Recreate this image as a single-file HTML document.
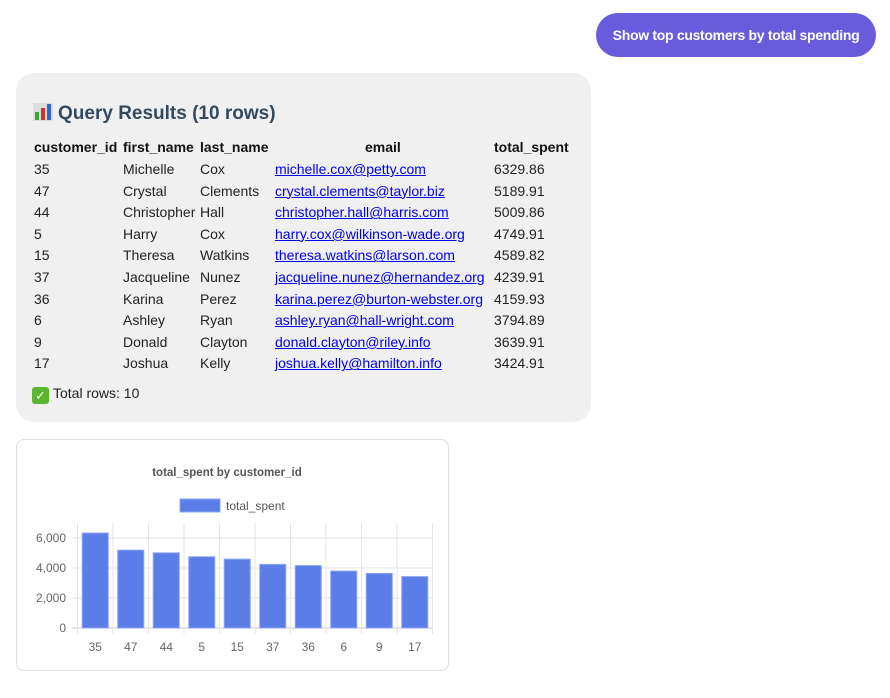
<!DOCTYPE html>
<html><head><meta charset="utf-8"><style>
body{margin:0;width:890px;height:698px;background:#fff;font-family:"Liberation Sans",Arial,sans-serif;position:relative;overflow:hidden}
.btn{position:absolute;left:596px;top:13px;width:280px;height:44px;border-radius:22px;background:#6a5bdc;color:#fff;font-size:14px;line-height:44px;text-align:center;font-weight:bold;letter-spacing:-0.3px}
.card{position:absolute;left:16px;top:73px;width:575px;height:349px;border-radius:18px;background:#f0f0f0}
h2{position:absolute;left:17px;top:30px;margin:0;font-size:19px;color:#34495e;font-weight:bold}
.t{position:absolute;font-size:14px;color:#222;white-space:nowrap}
.h{font-weight:bold;color:#111}
a{color:#0000ee;text-decoration:underline}
.chart{position:absolute;left:16px;top:439px;width:433px;height:232px;border:1px solid #ddd;border-radius:8px;box-sizing:border-box}
</style></head><body>
<div class="btn">Show top customers by total spending</div>
<div class="card">
<h2><span style="display:inline-block;width:20px;height:18px;vertical-align:-2px;background:#ddd;position:relative;margin-right:5px"><i style="position:absolute;left:2px;bottom:1px;width:4px;height:8px;background:#3a3"></i><i style="position:absolute;left:8px;bottom:1px;width:4px;height:12px;background:#c33"></i><i style="position:absolute;left:14px;bottom:1px;width:4px;height:16px;background:#36c"></i></span>Query Results (10 rows)</h2>
<div id="tbl"></div>
<div class="t" style="left:16px;top:312px"><span style="display:inline-block;width:17px;height:17px;background:#5cb531;border-radius:3px;color:#fff;font-size:13px;text-align:center;line-height:17px;vertical-align:-2px;margin-right:4px">✓</span>Total rows: 10</div>
</div>
<div class="chart">
<svg width="433" height="232" style="position:absolute;left:-1px;top:-1px" font-family="Liberation Sans, Arial, sans-serif">
<text x="211" y="37" text-anchor="middle" font-size="11.5" font-weight="bold" fill="#555">total_spent by customer_id</text>
<rect x="164" y="60" width="40" height="13" fill="#5b7de8" stroke="#8aa3f0"/>
<text x="210" y="71" font-size="12" fill="#555">total_spent</text>
<g id="g"></g>
</svg>
</div>
<script>
var d=[[35,"Michelle","Cox","michelle.cox@petty.com","6329.86"],[47,"Crystal","Clements","crystal.clements@taylor.biz","5189.91"],[44,"Christopher","Hall","christopher.hall@harris.com","5009.86"],[5,"Harry","Cox","harry.cox@wilkinson-wade.org","4749.91"],[15,"Theresa","Watkins","theresa.watkins@larson.com","4589.82"],[37,"Jacqueline","Nunez","jacqueline.nunez@hernandez.org","4239.91"],[36,"Karina","Perez","karina.perez@burton-webster.org","4159.93"],[6,"Ashley","Ryan","ashley.ryan@hall-wright.com","3794.89"],[9,"Donald","Clayton","donald.clayton@riley.info","3639.91"],[17,"Joshua","Kelly","joshua.kelly@hamilton.info","3424.91"]];
var h='<div class="t h" style="left:18px;top:66px">customer_id</div><div class="t h" style="left:107px;top:66px">first_name</div><div class="t h" style="left:184px;top:66px">last_name</div><div class="t h" style="left:349px;top:66px">email</div><div class="t h" style="left:478px;top:66px">total_spent</div>';
d.forEach(function(r,i){var y=88+i*21.6;h+='<div class="t" style="left:18px;top:'+y+'px">'+r[0]+'</div><div class="t" style="left:107px;top:'+y+'px">'+r[1]+'</div><div class="t" style="left:184px;top:'+y+'px">'+r[2]+'</div><div class="t" style="left:259px;top:'+y+'px"><a>'+r[3]+'</a></div><div class="t" style="left:478px;top:'+y+'px">'+r[4]+'</div>';});
document.getElementById('tbl').innerHTML=h;
var s='';
function X(x){return x-16}function Y(y){return y-438}
for(var k=0;k<=3;k++){var y=Y(627-k*30);s+='<line x1="'+X(72)+'" x2="'+X(433)+'" y1="'+y+'" y2="'+y+'" stroke="'+(k==0?'#ccc':'#e5e5e5')+'"/>';s+='<text x="'+X(66)+'" y="'+(y+4)+'" text-anchor="end" font-size="12" fill="#666">'+(k==0?'0':(k*2)+',000')+'</text>';}
for(var i=0;i<=10;i++){var x=X(77.5+i*35.5);s+='<line x1="'+x+'" x2="'+x+'" y1="'+Y(522)+'" y2="'+Y(633)+'" stroke="#e5e5e5"/>';}
d.forEach(function(r,i){var v=parseFloat(r[4]),bh=v*0.015,cx=77.5+17.75+i*35.5;s+='<rect x="'+X(cx-13)+'" y="'+Y(627-bh)+'" width="26" height="'+bh+'" fill="#5b7de8" stroke="#8aa3f0"/>';s+='<text x="'+X(cx)+'" y="'+Y(650)+'" text-anchor="middle" font-size="12" fill="#666">'+r[0]+'</text>';});
document.getElementById('g').innerHTML=s;
</script>
</body></html>
